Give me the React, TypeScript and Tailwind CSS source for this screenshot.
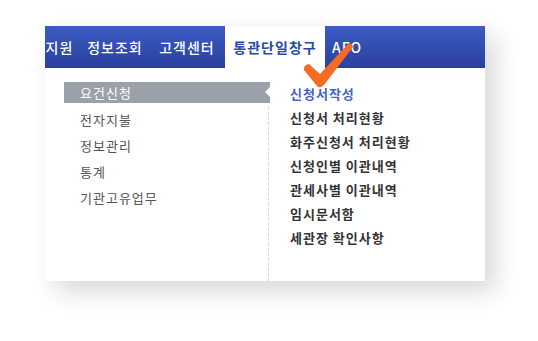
const NAV = [
  { label: '지원', w: 'w-[43px]' },
  { label: '정보조회', w: 'w-[68px]' },
  { label: '고객센터', w: 'w-[76px]' },
  { label: '통관단일창구', w: 'w-[100px]' },
  { label: 'AFO', w: 'w-[44px]' },
];
const ACTIVE = '통관단일창구';
const LEFT = ['전자지불', '정보관리', '통계', '기관고유업무'];
const RIGHT = [
  '신청서작성',
  '신청서 처리현황',
  '화주신청서 처리현황',
  '신청인별 이관내역',
  '관세사별 이관내역',
  '임시문서함',
  '세관장 확인사항',
];

export default function App() {
  return (
    <div
      className="w-[538px] h-[341px] bg-white pt-[26px] pl-[45px] overflow-hidden"
      style={{ fontFamily: '"Noto Sans CJK KR", "Noto Sans", sans-serif' }}
    >
      <div className="relative w-[440px] shadow-[10px_10px_24px_rgba(0,0,0,0.16)]">
        <div className="flex h-[42px] overflow-hidden bg-gradient-to-b from-[#3b5cc4] to-[#2a409e]">
          <div className="flex -ml-[7px]">
            {NAV.map((n) => {
              const active = n.label === ACTIVE;
              return (
                <div
                  key={n.label}
                  className={
                    active
                      ? `${n.w} flex items-center justify-center bg-white text-[14px] tracking-[1px] font-bold text-[#2b48a6]`
                      : `${n.w} flex items-center justify-center text-[14px] tracking-[1px] font-medium text-white`
                  }
                >
                  {n.label}
                </div>
              );
            })}
          </div>
        </div>

        <div className="flex h-[213px] bg-white">
          <div className="w-[224px] flex flex-col pt-[14px]">
            <div className="relative ml-[19px] w-[206px] h-[21px] bg-[#9ba1ab] pl-4 flex items-center text-[13px] tracking-[1px] text-white">
              요건신청
              <div className="absolute right-0 top-[5px] w-0 h-0 border-y-[5px] border-y-transparent border-r-[5px] border-r-white" />
            </div>
            <div className="flex-1 mt-[4px] border-r border-dashed border-[#d6d6d6]">
              {LEFT.map((l) => (
                <div
                  key={l}
                  className="h-[26px] pl-[35px] flex items-center text-[13px] tracking-[1px] text-[#555]"
                >
                  {l}
                </div>
              ))}
            </div>
          </div>
          <div className="flex-1 pt-[14px] pl-[21px]">
            {RIGHT.map((r, i) => (
              <div
                key={r}
                className={
                  i === 0
                    ? 'h-[24px] flex items-center text-[13px] tracking-[1px] font-bold text-[#4463c4]'
                    : 'h-[24px] flex items-center text-[13px] tracking-[1px] font-bold text-[#333]'
                }
              >
                {r}
              </div>
            ))}
          </div>
        </div>

        <svg
          className="absolute left-[255px] top-[14px]"
          width="56"
          height="52"
          viewBox="0 0 56 52"
        >
          <path
            d="M4 30 Q3 25 9 24 L20 34 L48 4 Q52 2 53 7 L24 45 Q20 49 17 46 Z"
            fill="#f36c21"
          />
        </svg>
      </div>
    </div>
  );
}
